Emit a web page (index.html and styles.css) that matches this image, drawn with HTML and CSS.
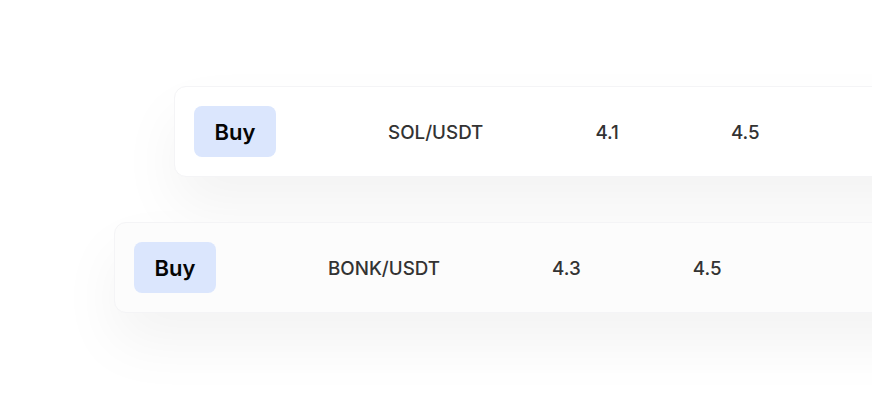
FILE: index.html
```html
<!DOCTYPE html>
<html lang="en">

<head>
    <meta charset="UTF-8">
    <meta name="viewport" content="width=device-width, initial-scale=1.0">
    <title>Trades</title>
    <link rel="stylesheet" href="styles.css">
</head>

<body>
    <div class="stack">
        <div class="row first">
            <button class="buy">Buy</button>
            <span class="pair">SOL/USDT</span>
            <span class="num">4.1</span>
            <span class="num">4.5</span>
        </div>
        <div class="row second">
            <button class="buy">Buy</button>
            <span class="pair">BONK/USDT</span>
            <span class="num">4.3</span>
            <span class="num">4.5</span>
        </div>
    </div>
</body>

</html>
```

FILE: styles.css
```css
* {
    margin: 0;
    padding: 0;
    box-sizing: border-box;
    font-family: "Inter", sans-serif;
}

body {
    background: #fff;
    width: 872px;
    height: 400px;
    overflow: hidden;
}

.stack {
    display: flex;
    flex-direction: column;
    gap: 45px;
    padding-top: 86px;
}

.row {
    width: 900px;
    display: flex;
    align-items: center;
    gap: 112px;
    padding: 19px;
    border: 1px solid #f4f4f6;
    border-radius: 12px;
    background: #fff;
    box-shadow: 0 30px 60px rgba(0, 0, 0, 0.05);
}

.first {
    margin-left: 174px;
}

.second {
    margin-left: 114px;
    background: #fcfcfc;
}

.buy {
    border: none;
    outline: none;
    background: #dbe6fd;
    border-radius: 8px;
    width: 82px;
    height: 51px;
    font-size: 22px;
    font-weight: 600;
    color: #050505;
    cursor: pointer;
}

.pair,
.num {
    font-size: 18.8px;
    font-weight: 500;
    color: #333;
    padding-top: 2px;
}
```
